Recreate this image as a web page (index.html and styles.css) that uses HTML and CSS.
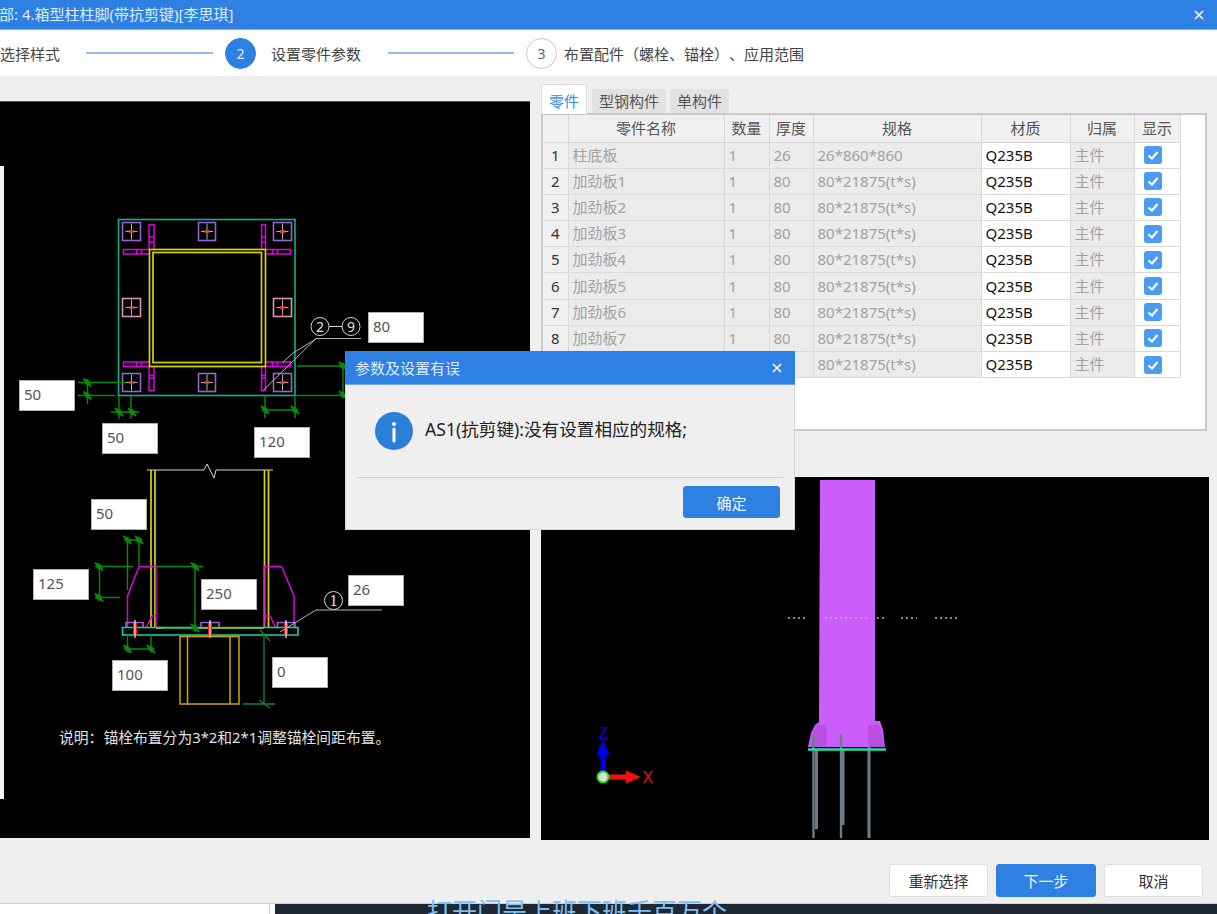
FILE: index.html
```html
<!DOCTYPE html>
<html lang="zh-CN">
<head>
<meta charset="utf-8">
<title>箱型柱柱脚</title>
<link rel="stylesheet" href="styles.css">
</head>
<body>
<div class="page">
  <main class="window">
    <header class="titlebar">
      <span class="title-text">部: 4.箱型柱柱脚(带抗剪键)[李思琪]</span>
      <svg class="close-icon" viewBox="0 0 10 10"><path d="M1 1L9 9M9 1L1 9"/></svg>
    </header>
    <nav class="steps">
      <span class="step-label first">选择样式</span>
      <span class="step-line"></span>
      <span class="step-num active">2</span>
      <span class="step-label second">设置零件参数</span>
      <span class="step-line short"></span>
      <span class="step-num">3</span>
      <span class="step-label third">布置配件（螺栓、锚栓）、应用范围</span>
    </nav>
    <section class="content">
      <div class="drawing">
        <span class="edge-strip"></span>
        <svg class="drawing-svg" viewBox="0 101 530 737">
          <defs>
            <g id="bolt-core"><path class="s-gray" d="M0 -8V8M-6 0H6"/><path class="s-red" d="M-2.5 0H2.5"/></g>
            <path id="tick" class="s-tick" d="M-4 -4L4 4M-3 -1L1 3M-1 -3L3 1"/>
          </defs>
          <g class="s-teal"><rect x="118.5" y="219.5" width="176.5" height="176"/></g>
          <g class="s-mag">
            <path d="M149 249V224.5H154V249M149 237H154M149 242H154"/>
            <path d="M261.5 249V224.5H265.5V249M261.5 237H265.5M261.5 242H265.5"/>
            <path d="M149 249.5H123.5V254H149M136.5 249.5V254M141.5 249.5V254"/>
            <path d="M265.5 249.5H290.5V254H265.5M272.5 249.5V254M277.5 249.5V254"/>
            <path d="M149 362H123.5V366.5H149M136.5 362V366.5M141.5 362V366.5"/>
            <path d="M265.5 362H290.5V366.5H265.5M272.5 362V366.5M277.5 362V366.5"/>
            <path d="M149 367V390.5H154V367M149 375.5H154M149 378H154"/>
            <path d="M261.5 367V390.5H265.5V367M261.5 375.5H265.5M261.5 378H265.5"/>
          </g>
          <g class="s-yel">
            <rect x="149.5" y="249.5" width="116" height="117"/>
            <rect x="153" y="252.5" width="108.5" height="110"/>
          </g>
          <g class="s-pur">
            <rect x="122.5" y="222.5" width="18" height="18"/>
            <rect x="198.5" y="222.5" width="17" height="18"/>
            <rect x="273.5" y="222.5" width="18" height="18"/>
            <rect x="122.5" y="373.5" width="18" height="18"/>
            <rect x="198.5" y="373.5" width="17" height="18"/>
            <rect x="273.5" y="373.5" width="18" height="18"/>
          </g>
          <g class="s-pink">
            <rect x="122.5" y="298.5" width="18" height="18"/>
            <rect x="273.5" y="298.5" width="18" height="18"/>
          </g>
          <use href="#bolt-core" x="131.5" y="231.5"/>
          <use href="#bolt-core" x="207" y="231.5"/>
          <use href="#bolt-core" x="282.5" y="231.5"/>
          <use href="#bolt-core" x="131.5" y="307.5"/>
          <use href="#bolt-core" x="282.5" y="307.5"/>
          <use href="#bolt-core" x="131.5" y="382.5"/>
          <use href="#bolt-core" x="207" y="382.5"/>
          <use href="#bolt-core" x="282.5" y="382.5"/>

          <g class="s-green">
            <path d="M78 382.500H125M78 395.500H115M87.500 379V404"/>
            <path d="M119 396V419M131 396V419M111 412H139"/>
            <path d="M265 396V418M295 396V418M265 410H295"/>
            <path d="M297 366H345M296 395.500H345M343 364V397"/>
            <use href="#tick" x="87.500" y="382.500"/><use href="#tick" x="87.500" y="395.500"/>
            <use href="#tick" x="119" y="412"/><use href="#tick" x="132" y="412"/>
            <use href="#tick" x="265" y="410"/><use href="#tick" x="295" y="410"/>
            <use href="#tick" x="343" y="366"/><use href="#tick" x="343" y="395"/>
          </g>
          <g class="s-white">
            <circle cx="320" cy="326.500" r="9"/><circle cx="351" cy="326.500" r="9"/>
            <path d="M329 326.500H342"/>
          </g>
          <g class="s-gray">
            <path d="M361 338.500H316L263.500 390M316 339L293 353L283 362"/>
          </g>
          <text class="circ" x="320" y="331.500">2</text>
          <text class="circ" x="351" y="331.500">9</text>

          <path class="s-white" d="M147 470H204L207 464L214 478L216 470H273"/>
          <g class="s-yel">
            <path d="M151 470V628M155 470V628M264.500 470V628M268.500 470V628"/>
          </g>
          <g class="s-mag">
            <path d="M127.500 628V596L139 566.500H156V628"/>
            <path d="M264 628V566.500H281.500L294 596V628"/>
            <path d="M146 628L152 616H156M264 616H270L276 628"/>
          </g>
          <path class="s-yel" d="M156 628H264"/>
          <path class="s-dgreen" d="M163 628H195"/>
          <g class="s-pur">
            <path d="M126 628V622.500H143V628M201 628V622.500H219V628M277.500 628V622.500H295V628"/>
          </g>
          <rect class="s-teal-b" x="122.500" y="627.500" width="175.500" height="7.500"/>
          <g class="s-redw">
            <path d="M135 623V635M210 623V635M286 623V635"/>
          </g>
          <g class="s-gray-t">
            <path d="M135 620V638M210 620V638M286 620V638"/>
          </g>
          <g class="s-gold">
            <rect x="180" y="636.500" width="59" height="67.500"/>
            <path d="M187.500 636.500V705M230 636.500V704"/>
          </g>
          <g class="s-green">
            <path d="M127.500 538V590M139 538V566M125 540H142"/>
            <path d="M95 566.500H133M95 597.500H120M99.500 566V598"/>
            <path d="M156 566.500H203M195 566V628"/>
            <path d="M127.500 635V650M151 635V650M125 649H153"/>
            <use href="#tick" x="127.500" y="540"/><use href="#tick" x="139" y="540"/>
            <use href="#tick" x="99" y="566.500"/><use href="#tick" x="99" y="597.500"/>
            <use href="#tick" x="195" y="566.500"/><use href="#tick" x="195" y="628"/>
            <use href="#tick" x="127.500" y="649"/><use href="#tick" x="151" y="649"/>
          </g>
          <g class="s-sea">
            <path d="M264 633V704M243 704H275M260 630L270 641M259 700L270 708"/>
          </g>
          <circle class="s-white" cx="333.500" cy="600.500" r="9"/>
          <text class="circ big" x="333.500" y="606">1</text>
          <path class="s-gray" d="M382 610H316L280 632"/>
        </svg>
        <span class="dim d80">80</span>
        <span class="dim d50a">50</span>
        <span class="dim d50b">50</span>
        <span class="dim d120">120</span>
        <span class="dim d50c">50</span>
        <span class="dim d125">125</span>
        <span class="dim d250">250</span>
        <span class="dim d26">26</span>
        <span class="dim d100">100</span>
        <span class="dim d0">0</span>
        <p class="note">说明：锚栓布置分为3*2和2*1调整锚栓间距布置。</p>
      </div>
      <div class="side">
        <div class="tabs">
          <span class="tab active">零件</span>
          <span class="tab">型钢构件</span>
          <span class="tab">单构件</span>
        </div>
        <div class="table-frame">
          <table class="parts">
            <colgroup>
              <col class="c-no"><col class="c-name"><col class="c-qty"><col class="c-thk"><col class="c-spec"><col class="c-mat"><col class="c-own"><col class="c-show">
            </colgroup>
            <thead>
              <tr><th></th><th>零件名称</th><th>数量</th><th>厚度</th><th>规格</th><th>材质</th><th>归属</th><th>显示</th></tr>
            </thead>
            <tbody>
              <tr><td class="no">1</td><td>柱底板</td><td>1</td><td>26</td><td>26*860*860</td><td class="mat">Q235B</td><td>主件</td><td class="show"><span class="check"><svg viewBox="0 0 18 18"><path d="M4.500 9.500L8 12.500L13.500 6"/></svg></span></td></tr>
              <tr><td class="no">2</td><td>加劲板1</td><td>1</td><td>80</td><td>80*21875(t*s)</td><td class="mat">Q235B</td><td>主件</td><td class="show"><span class="check"><svg viewBox="0 0 18 18"><path d="M4.500 9.500L8 12.500L13.500 6"/></svg></span></td></tr>
              <tr><td class="no">3</td><td>加劲板2</td><td>1</td><td>80</td><td>80*21875(t*s)</td><td class="mat">Q235B</td><td>主件</td><td class="show"><span class="check"><svg viewBox="0 0 18 18"><path d="M4.500 9.500L8 12.500L13.500 6"/></svg></span></td></tr>
              <tr><td class="no">4</td><td>加劲板3</td><td>1</td><td>80</td><td>80*21875(t*s)</td><td class="mat">Q235B</td><td>主件</td><td class="show"><span class="check"><svg viewBox="0 0 18 18"><path d="M4.500 9.500L8 12.500L13.500 6"/></svg></span></td></tr>
              <tr><td class="no">5</td><td>加劲板4</td><td>1</td><td>80</td><td>80*21875(t*s)</td><td class="mat">Q235B</td><td>主件</td><td class="show"><span class="check"><svg viewBox="0 0 18 18"><path d="M4.500 9.500L8 12.500L13.500 6"/></svg></span></td></tr>
              <tr><td class="no">6</td><td>加劲板5</td><td>1</td><td>80</td><td>80*21875(t*s)</td><td class="mat">Q235B</td><td>主件</td><td class="show"><span class="check"><svg viewBox="0 0 18 18"><path d="M4.500 9.500L8 12.500L13.500 6"/></svg></span></td></tr>
              <tr><td class="no">7</td><td>加劲板6</td><td>1</td><td>80</td><td>80*21875(t*s)</td><td class="mat">Q235B</td><td>主件</td><td class="show"><span class="check"><svg viewBox="0 0 18 18"><path d="M4.500 9.500L8 12.500L13.500 6"/></svg></span></td></tr>
              <tr><td class="no">8</td><td>加劲板7</td><td>1</td><td>80</td><td>80*21875(t*s)</td><td class="mat">Q235B</td><td>主件</td><td class="show"><span class="check"><svg viewBox="0 0 18 18"><path d="M4.500 9.500L8 12.500L13.500 6"/></svg></span></td></tr>
              <tr><td class="no">9</td><td>加劲板8</td><td>1</td><td>80</td><td>80*21875(t*s)</td><td class="mat">Q235B</td><td>主件</td><td class="show"><span class="check"><svg viewBox="0 0 18 18"><path d="M4.500 9.500L8 12.500L13.500 6"/></svg></span></td></tr>
            </tbody>
          </table>
        </div>
        <div class="model">
          <svg class="model-svg" viewBox="541 477 668 363">
            <path class="col" d="M820 480H875V721L880 721L883 730L885 747H808L811 733L815 725L819 722Z"/>
            <path class="col-shade" d="M811 747L812 735L816 725H826.500V747ZM868 747V725H880L884 747Z"/>
            <path class="dots" d="M788 618H806M825 618H868M877 618H884M901 618H917M935 618H958"/>
            <g class="rods">
              <path class="rod" d="M813.500 735V838"/>
              <path class="rod thick" d="M816.500 749V829"/>
              <path class="rod" d="M841 734V838"/>
              <path class="rod thick" d="M843 749V825"/>
              <path class="rod thick" d="M869 747V838"/>
            </g>
            <path class="base" d="M808 749.500H886"/>
            <path class="ax-z" d="M603 772V752"/>
            <path class="ax-zh" d="M603 740L596.500 755H609.500Z"/>
            <path class="ax-x" d="M608 777H628"/>
            <path class="ax-xh" d="M641 777L626 770.500V783.500Z"/>
            <circle class="ax-o" cx="603" cy="777" r="5.500"/>
            <text class="ax-t z" x="603" y="739">Z</text>
            <text class="ax-t x" x="648" y="783">X</text>
          </svg>
        </div>
      </div>
    </section>
    <footer class="actions">
      <button class="btn">重新选择</button>
      <button class="btn primary">下一步</button>
      <button class="btn">取消</button>
    </footer>
  </main>
  <div class="taskstrip"><span class="strip-left"></span><span class="strip-right"></span></div>
  <span class="subtitle">打开门是上班下班千百万个</span>

  <aside class="modal">
    <header class="modal-title">
      <span>参数及设置有误</span>
      <svg class="close-icon small" viewBox="0 0 10 10"><path d="M1 1L9 9M9 1L1 9"/></svg>
    </header>
    <div class="modal-body">
      <svg class="info" viewBox="0 0 38 38"><circle cx="19" cy="19" r="19"/><circle class="dot" cx="19" cy="12" r="2"/><path d="M19 17V29"/></svg>
      <span class="modal-msg">AS1(抗剪键):没有设置相应的规格;</span>
    </div>
    <div class="modal-foot"><button class="btn primary small-btn">确定</button></div>
  </aside>
</div>
</body>
</html>
```
FILE: styles.css
```css
* { box-sizing: border-box; }
html, body { margin: 0; padding: 0; }
body { font-family: "Noto Sans", "Noto Sans CJK SC", sans-serif; font-size: 15px; color: #333; }
.page { position: relative; width: 1217px; height: 914px; overflow: hidden; background: #fff; }
.window { height: 904px; background: #efefef; display: flex; flex-direction: column; border-bottom: 1px solid #cdd3da; }

.titlebar { height: 30px; flex: none; background: #2e80e2; color: #dcebfb; display: flex; align-items: center; justify-content: space-between; padding-right: 13px; border-bottom: 1px solid #7fb2ee; }
.title-text { font-size: 15px; line-height: 27px; margin-left: -1px; }
.close-icon { width: 10px; height: 10px; }
.close-icon path { stroke: #fff; stroke-width: 1.6; fill: none; }

.steps { height: 46px; flex: none; background: #fff; display: flex; align-items: center; }
.step-label { font-size: 15px; color: #444; line-height: 20px; white-space: nowrap; padding-top: 2px; }
.step-label.first { width: 86px; }
.step-label.second { margin-left: 15px; width: 117px; }
.step-label.third { margin-left: 7px; text-spacing-trim: space-all; font-feature-settings: "palt" 0, "halt" 0, "chws" 0; }
.step-line { width: 127px; height: 2px; background: #93bdf0; flex: none; }
.step-line.short { width: 126px; }
.step-num { width: 31px; height: 31px; border-radius: 50%; margin-left: 12px; display: flex; align-items: center; justify-content: center; font-size: 14px; flex: none; color: #666; background: #fff; border: 1px solid #c8c8c8; }
.step-num.active { background: #2e80e2; border-color: #2e80e2; color: #e6f0fc; }

.content { flex: 1; display: flex; align-items: flex-start; }

.drawing { position: relative; width: 530px; height: 737px; margin-top: 25px; background: #000; flex: none; border-top: 1px solid #555; }
.edge-strip { position: absolute; left: 0; top: 64px; width: 4px; height: 633px; background: #f4f4f4; }
.drawing-svg { display: block; width: 530px; height: 737px; position: absolute; left: 0; top: -1px; }
.drawing-svg path, .drawing-svg rect, .drawing-svg circle { fill: none; }
.s-teal rect { stroke: #12ae8c; stroke-width: 1.6; }
.s-teal-b { stroke: #14d4a8; stroke-width: 1.5; }
.s-mag path, .s-mag { stroke: #e000e0; stroke-width: 1.5; }
.s-yel { stroke: #d6d400; stroke-width: 1.7; }
.s-pur { stroke: #9a62cc; stroke-width: 1.6; }
.s-pink { stroke: #d896a8; stroke-width: 1.6; }
.s-gray { stroke: #b4b4b4; stroke-width: 1; }
.s-red { stroke: #f03a30; stroke-width: 2.6; }
.s-green { stroke: #0a8a0a; stroke-width: 1.4; fill: none; }
.s-tick { stroke: #0a8a0a; stroke-width: 2; }
.s-dgreen { stroke: #0a7a0a; stroke-width: 1.4; }
.s-sea { stroke: #18803c; stroke-width: 1.3; }
.s-white { stroke: #d8d8d8; stroke-width: 1; }
.s-redw { stroke: #f41a10; stroke-width: 4; }
.s-gray-t { stroke: #eeeeee; stroke-width: 1.2; }
.s-gold { stroke: #d4a300; stroke-width: 1.5; }
.circ { font-size: 14px; fill: #e0e0e0; text-anchor: middle; }
.circ.big { font-family: "Liberation Serif", serif; font-size: 16px; }

.dim { position: absolute; width: 56px; height: 31px; background: #fff; border: 1px solid #aeaeae; color: #555; font-size: 15px; line-height: 27px; padding-left: 4px; }
.d80 { left: 368px; top: 210px; }
.d50a { left: 19px; top: 278px; }
.d50b { left: 102px; top: 321px; }
.d120 { left: 254px; top: 325px; }
.d50c { left: 91px; top: 397px; }
.d125 { left: 33px; top: 467px; }
.d250 { left: 201px; top: 477px; }
.d26 { left: 348px; top: 473px; }
.d100 { left: 112px; top: 558px; }
.d0 { left: 272px; top: 555px; }
.note { position: absolute; left: 59px; top: 624px; margin: 0; color: #e2e2e2; font-size: 14.8px; line-height: 22px; white-space: nowrap; }

.side { width: 668px; margin-left: 11px; margin-top: 8px; flex: none; }
.tabs { height: 30px; display: flex; align-items: flex-end; gap: 4px; position: relative; z-index: 1; margin-bottom: -1px; }
.tab { height: 24px; padding: 0 7px; background: #e2e2e2; border-radius: 3px 3px 0 0; font-size: 15px; line-height: 24px; color: #555; margin-bottom: 1px; }
.tab.active { height: 30px; width: 46px; background: #fff; color: #2f8ee6; line-height: 32px; text-align: center; padding: 0; border: 1px solid #dcdcdc; border-bottom: 0; margin-bottom: 0; margin-right: 1px; }
.table-frame { width: 666px; height: 318px; background: #fff; border: 2px solid #c9c9c9; }
.parts { border-collapse: collapse; table-layout: fixed; width: 637px; }
.c-no { width: 25px; } .c-name { width: 156px; } .c-qty { width: 45px; } .c-thk { width: 44px; }
.c-spec { width: 168px; } .c-mat { width: 89px; } .c-own { width: 64px; } .c-show { width: 46px; }
.parts th { height: 27px; padding: 0; background: #f0f0f0; border: 1px solid #d8d8d8; border-top: 0; font-weight: 400; font-size: 15px; color: #555; line-height: 20px; }
.parts td { height: 26.2px; padding: 0 4px; background: #ebebeb; border: 1px solid #dadada; color: #a2a2a2; font-size: 15px; line-height: 19px; white-space: nowrap; overflow: hidden; }
.parts th:first-child, .parts td:first-child { border-left: 0; }
.parts td.no { color: #333; background: #f0f0f0; text-align: center; padding: 0; }
.parts td.mat { background: #fff; color: #111; }
.parts td.show { background: #fff; padding: 0; text-align: center; }
.check { display: block; width: 18px; height: 18px; margin-left: 9px; border-radius: 3px; background: #4a9bf2; }
.check svg { display: block; width: 18px; height: 18px; }
.check path { fill: none; stroke: #fff; stroke-width: 2.2; }

.model { width: 668px; height: 363px; margin-top: 46px; background: #000; }
.model-svg { display: block; width: 668px; height: 363px; }
.dots { stroke: #b8b8b8; stroke-width: 1.4; stroke-dasharray: 2 3; fill: none; }
.col { fill: #cc5cfc; }
.col-shade { fill: #b94fe0; }
.rod { stroke: #6c7c8c; stroke-width: 2.4; fill: none; }
.rod.thick { stroke-width: 3; }
.base { stroke: #1fe3a6; stroke-width: 2.6; fill: none; }
.ax-z { stroke: #0000f0; stroke-width: 5; fill: none; }
.ax-zh { fill: #0000f0; }
.ax-x { stroke: #f41010; stroke-width: 5; fill: none; }
.ax-xh { fill: #f41010; }
.ax-o { fill: #dcdcdc; stroke: #18e018; stroke-width: 2; }
.ax-t { font-size: 17px; text-anchor: middle; }
.ax-t.z { fill: #0000e8; }
.ax-t.x { fill: #f01010; }

.actions { flex: 1; display: flex; justify-content: flex-end; align-items: flex-start; gap: 8px; padding: 24px 14px 0 0; }
.btn { width: 99px; height: 33px; padding: 0; font: inherit; font-size: 15px; color: #333; background: #fff; border: 1px solid #dedede; border-radius: 3px; }
.btn.primary { width: 100px; background: #2e80e2; border-color: #2e80e2; color: #f0f6fd; }
.btn.small-btn { width: 97px; height: 32px; }

.taskstrip { display: flex; height: 10px; background: #fff; }
.strip-left { width: 270px; border-right: 1px solid #ccc; }
.strip-right { margin-left: 5px; flex: 1; background: #1f2833; }
.subtitle { position: absolute; left: 427px; top: 893px; font-size: 25px; line-height: 36px; color: #7dc0f5; white-space: nowrap; }

.modal { position: absolute; left: 345px; top: 351px; width: 450px; height: 179px; background: #efefef; border: 1px solid #cfd6df; border-top: 0; display: flex; flex-direction: column; }
.modal-title { height: 34px; flex: none; background: #2e80e2; color: #dcebfb; font-size: 15px; display: flex; align-items: center; justify-content: space-between; padding: 0 13px 0 10px; margin: 0 -1px; border-bottom: 1px solid #6ea8ea; }
.close-icon.small { width: 10px; height: 10px; }
.modal-body { height: 93px; flex: none; margin: 0 11px; padding: 27px 0 0 18px; border-bottom: 1px solid #cdd0d5; display: flex; align-items: flex-start; gap: 12px; }
.info { width: 38px; height: 38px; flex: none; }
.info circle { fill: #2a7fd8; }
.info .dot { fill: #fff; }
.info path { stroke: #fff; stroke-width: 3; stroke-linecap: round; fill: none; }
.modal-msg { font-size: 17.6px; line-height: 34px; color: #222; white-space: nowrap; }
.modal-foot { display: flex; justify-content: flex-end; padding: 8px 14px 0 0; }
```
